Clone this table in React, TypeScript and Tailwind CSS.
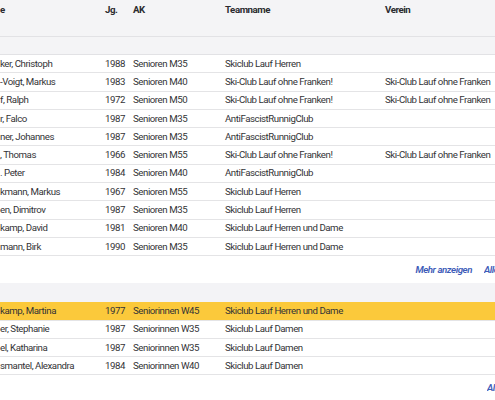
import React from "react";

type Row = {
  name: string;
  jg: string;
  ak: string;
  team: string;
  verein?: string;
  highlight?: boolean;
};

const herren: Row[] = [
  { name: "ker, Christoph", jg: "1988", ak: "Senioren M35", team: "Skiclub Lauf Herren" },
  { name: "-Voigt, Markus", jg: "1983", ak: "Senioren M40", team: "Ski-Club Lauf ohne Franken!", verein: "Ski-Club Lauf ohne Franken" },
  { name: "f, Ralph", jg: "1972", ak: "Senioren M50", team: "Ski-Club Lauf ohne Franken!", verein: "Ski-Club Lauf ohne Franken" },
  { name: "r, Falco", jg: "1987", ak: "Senioren M35", team: "AntiFascistRunnigClub" },
  { name: "ner, Johannes", jg: "1987", ak: "Senioren M35", team: "AntiFascistRunnigClub" },
  { name: ", Thomas", jg: "1966", ak: "Senioren M55", team: "Ski-Club Lauf ohne Franken!", verein: "Ski-Club Lauf ohne Franken" },
  { name: ". Peter", jg: "1984", ak: "Senioren M40", team: "AntiFascistRunnigClub" },
  { name: "kmann, Markus", jg: "1967", ak: "Senioren M55", team: "Skiclub Lauf Herren" },
  { name: "en, Dimitrov", jg: "1987", ak: "Senioren M35", team: "Skiclub Lauf Herren" },
  { name: "kamp, David", jg: "1981", ak: "Senioren M40", team: "Skiclub Lauf Herren und Dame" },
  { name: "mann, Birk", jg: "1990", ak: "Senioren M35", team: "Skiclub Lauf Herren und Dame" },
];

const damen: Row[] = [
  { name: "kamp, Martina", jg: "1977", ak: "Seniorinnen W45", team: "Skiclub Lauf Herren und Dame", highlight: true },
  { name: "er, Stephanie", jg: "1987", ak: "Seniorinnen W35", team: "Skiclub Lauf Damen" },
  { name: "el, Katharina", jg: "1987", ak: "Seniorinnen W35", team: "Skiclub Lauf Damen" },
  { name: "smantel, Alexandra", jg: "1984", ak: "Seniorinnen W40", team: "Skiclub Lauf Damen" },
];

const ResultRow: React.FC<{ row: Row }> = ({ row }) => (
  <div
    className={`flex items-center h-[18.3px] border-b border-[#e4e4e6] ${
      row.highlight ? "bg-[#fbc93b]" : "bg-white"
    }`}
  >
    <div className="w-[105px] shrink-0 whitespace-nowrap overflow-hidden">{row.name}</div>
    <div className="w-[28px] shrink-0">{row.jg}</div>
    <div className="w-[92px] shrink-0 whitespace-nowrap">{row.ak}</div>
    <div className="w-[160px] shrink-0 whitespace-nowrap">{row.team}</div>
    <div className="whitespace-nowrap">{row.verein ?? ""}</div>
  </div>
);

export default function App() {
  return (
    <div
      className="w-[495px] h-[400px] overflow-hidden bg-white text-[9.7px] tracking-[-0.45px] text-[#333336] leading-[12px]"
      style={{ fontFamily: "Roboto, 'Liberation Sans', sans-serif" }}
    >
      {/* header */}
      <div className="flex h-[37px] pt-[4px] bg-[#f4f4f6] border-b border-[#e2e2e5] font-bold text-[#2b2b2f]">
        <div className="w-[105px] shrink-0">e</div>
        <div className="w-[28px] shrink-0">Jg.</div>
        <div className="w-[92px] shrink-0">AK</div>
        <div className="w-[160px] shrink-0">Teamname</div>
        <div>Verein</div>
      </div>
      {/* group row */}
      <div className="h-[18px] bg-[#f4f4f6] border-b border-[#e2e2e5]" />
      {herren.map((r, i) => (
        <ResultRow key={i} row={r} />
      ))}
      <div className="flex justify-end items-center h-[27px] gap-[12px] italic font-semibold text-[#3d5bb8] whitespace-nowrap">
        <span>Mehr anzeigen</span>
        <span className="w-[11px] overflow-hidden">Alle anzeigen</span>
      </div>
      <div className="h-[19px] bg-[#f3f3f6]" />
      {damen.map((r, i) => (
        <ResultRow key={i} row={r} />
      ))}
      <div className="flex justify-end items-center h-[25px] italic font-semibold text-[#3d5bb8] whitespace-nowrap">
        <span className="w-[8px] overflow-hidden">Alle anzeigen</span>
      </div>
    </div>
  );
}
